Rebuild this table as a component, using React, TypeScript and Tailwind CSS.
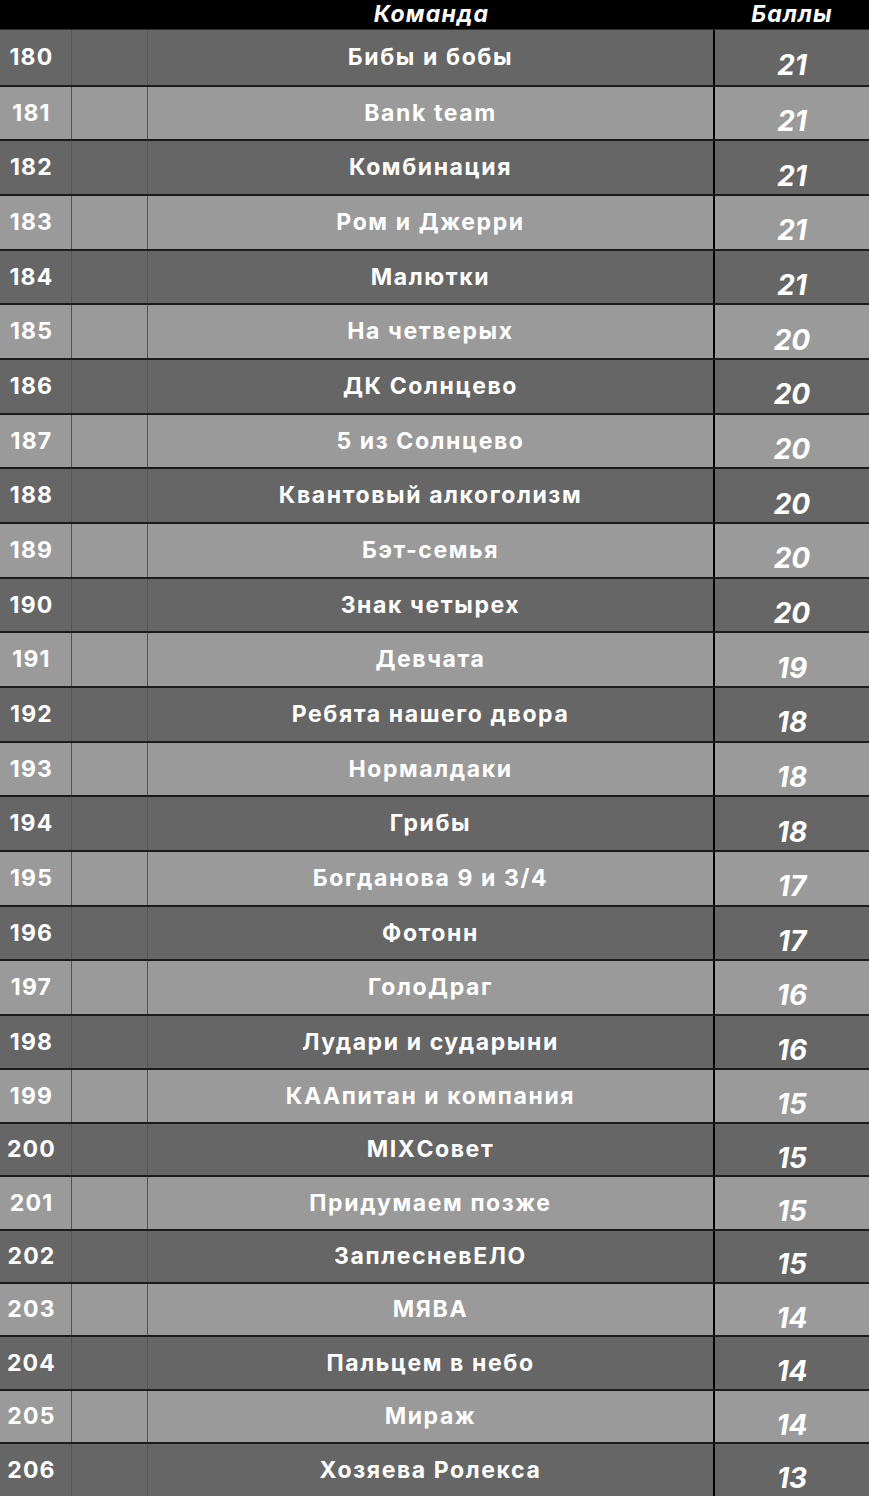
const rows: [number, string, number][] = [
  [180, 'Бибы и бобы', 21],
  [181, 'Bank team', 21],
  [182, 'Комбинация', 21],
  [183, 'Ром и Джерри', 21],
  [184, 'Малютки', 21],
  [185, 'На четверых', 20],
  [186, 'ДК Солнцево', 20],
  [187, '5 из Солнцево', 20],
  [188, 'Квантовый алкоголизм', 20],
  [189, 'Бэт-семья', 20],
  [190, 'Знак четырех', 20],
  [191, 'Девчата', 19],
  [192, 'Ребята нашего двора', 18],
  [193, 'Нормалдаки', 18],
  [194, 'Грибы', 18],
  [195, 'Богданова 9 и 3/4', 17],
  [196, 'Фотонн', 17],
  [197, 'ГолоДраг', 16],
  [198, 'Лудари и сударыни', 16],
  [199, 'КААпитан и компания', 15],
  [200, 'MIXСовет', 15],
  [201, 'Придумаем позже', 15],
  [202, 'ЗаплесневЕЛО', 15],
  [203, 'МЯВА', 14],
  [204, 'Пальцем в небо', 14],
  [205, 'Мираж', 14],
  [206, 'Хозяева Ролекса', 13],
];

export default function App() {
  return (
    <div className="w-[869px] h-[1496px] overflow-hidden bg-black text-white font-['Inter','Liberation_Sans',sans-serif]">
      {/* header */}
      <div className="flex h-[30px] bg-black border-b border-[#2e2e2e] italic font-bold text-[23px] leading-none tracking-[1.2px]">
        <div className="w-[148px]" />
        <div className="w-[567px] flex items-start justify-center pt-[3px]">Команда</div>
        <div className="flex-1 flex items-start justify-center pt-[3px]">Баллы</div>
      </div>

      {rows.map(([rank, team, score], i) => {
        const dark = i % 2 === 0;
        const bg = dark ? 'bg-[#666666]' : 'bg-[#9a9a9a]';
        const height = i < 19 ? 'h-[54.67px]' : 'h-[53.4px]';
        return (
          <div key={rank} className={`flex ${height} ${bg} ${i > 0 ? 'border-t-2 border-[#1c1c1c]' : ''}`}>
            <div className="w-[72px] shrink-0 flex items-center justify-center pr-2 border-r border-[#555] font-bold text-[23px] tracking-[1.2px]">
              {rank}
            </div>
            <div className="w-[76px] shrink-0 border-r border-[#555]" />
            <div className="w-[567px] shrink-0 flex items-center justify-center border-r-2 border-black font-bold text-[23px] tracking-[1.6px]">
              {team}
            </div>
            <div className="flex-1 flex items-center justify-center pt-4 italic font-bold text-[28px]">
              {score}
            </div>
          </div>
        );
      })}
    </div>
  );
}
